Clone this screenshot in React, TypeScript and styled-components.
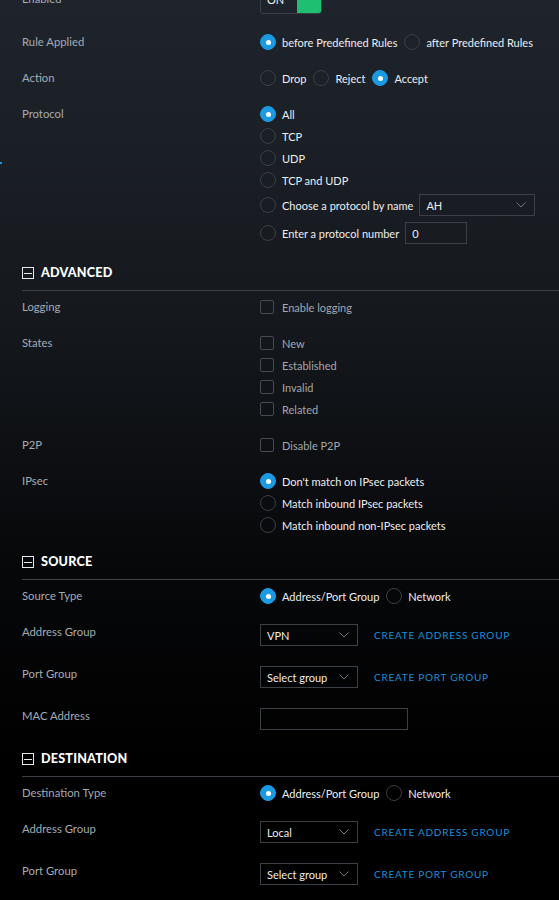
import * as React from "react";
import styled, { createGlobalStyle } from "styled-components";

const colors = {
  label: "#a3abb4",
  text: "#eceef0",
  muted: "#a2a7ad",
  border: "#3b4047",
  blue: "#1b9ae2",
  link: "#1a8fd9",
  green: "#1fbf72",
};

const LABEL_SIZE = "11.3px";
const OPTION_SIZE = "11px";

const GlobalStyle = createGlobalStyle`
  html, body {
    margin: 0;
    padding: 0;
    background: #000;
  }
  body {
    font-family: Lato, "Open Sans", sans-serif;
    -webkit-font-smoothing: antialiased;
  }
`;

const Page = styled.div`
  position: relative;
  min-height: 900px;
  overflow: hidden;
  background: linear-gradient(180deg, #1f242c 0%, #15191e 35%, #07080a 62%, #000 85%);
`;

const Content = styled.div`
  margin-top: -12px;
  padding-left: 22px;
`;

const EdgeMark = styled.span`
  position: absolute;
  left: 0;
  top: 162px;
  width: 2px;
  height: 2px;
  background: ${colors.blue};
`;

const Row = styled.div`
  display: flex;
  align-items: flex-start;
  margin-bottom: 14px;
`;

const Label = styled.div`
  width: 238px;
  flex-shrink: 0;
  padding-top: 3px;
  font-size: ${LABEL_SIZE};
  line-height: 16px;
  color: ${colors.label};
`;

const Control = styled.div<{ $inline?: boolean }>`
  display: flex;
  flex-direction: ${(p) => (p.$inline ? "row" : "column")};
  align-items: ${(p) => (p.$inline ? "center" : "flex-start")};
`;

const Option = styled.label`
  display: flex;
  align-items: center;
  min-height: 22px;
  margin-right: 7px;
  gap: 6px;
`;

const Radio = styled.span<{ $checked?: boolean }>`
  box-sizing: border-box;
  width: 16px;
  height: 16px;
  border-radius: 50%;
  flex-shrink: 0;
  border: 1px solid ${(p) => (p.$checked ? colors.blue : "#3a3f46")};
  background: ${(p) => (p.$checked ? colors.blue : "transparent")};
  display: flex;
  align-items: center;
  justify-content: center;

  &::after {
    content: "";
    width: 5px;
    height: 5px;
    border-radius: 50%;
    background: #fff;
    display: ${(p) => (p.$checked ? "block" : "none")};
  }
`;

const Checkbox = styled.span`
  box-sizing: border-box;
  width: 14px;
  height: 14px;
  flex-shrink: 0;
  border: 1px solid #464b52;
  border-radius: 2px;
  margin-right: 2px;
`;

const OptionText = styled.span<{ $muted?: boolean }>`
  font-size: ${OPTION_SIZE};
  color: ${(p) => (p.$muted ? colors.muted : colors.text)};
  white-space: nowrap;
`;

const Toggle = styled.div`
  display: flex;
  box-sizing: border-box;
  width: 62px;
  height: 26px;
  border: 1px solid #3a3f46;
  border-radius: 3px;
  overflow: hidden;
  margin-bottom: 3px;
`;

const ToggleText = styled.span`
  width: 30px;
  font-size: ${OPTION_SIZE};
  line-height: 22px;
  padding-left: 6px;
  color: ${colors.text};
`;

const ToggleKnob = styled.span`
  flex: 1;
  background: ${colors.green};
`;

const SelectBox = styled.div<{ $width: number }>`
  box-sizing: border-box;
  display: flex;
  align-items: center;
  justify-content: space-between;
  width: ${(p) => p.$width}px;
  height: 22px;
  margin: 3px 0;
  padding: 0 8px 0 6px;
  border: 1px solid ${colors.border};
  font-size: ${OPTION_SIZE};
  color: ${colors.text};
`;

const TextInput = styled.input<{ $width: number }>`
  box-sizing: border-box;
  width: ${(p) => p.$width}px;
  height: 22px;
  margin: 3px 0;
  padding: 0 6px;
  border: 1px solid ${colors.border};
  border-radius: 0;
  background: transparent;
  font-family: Lato, sans-serif;
  font-size: ${OPTION_SIZE};
  color: ${colors.text};
  outline: none;
`;

const Link = styled.a`
  margin-left: 16px;
  font-size: 10px;
  letter-spacing: 0.75px;
  text-transform: uppercase;
  color: ${colors.link};
  cursor: pointer;
`;

const SectionHeader = styled.div`
  display: flex;
  align-items: center;
  gap: 7px;
  padding: 4px 0 9px;
  border-bottom: 1px solid #3d4249;
  margin-bottom: 5px;
`;

const CollapseIcon = styled.span`
  box-sizing: border-box;
  width: 12px;
  height: 12px;
  border: 1px solid #e6e8ea;
  display: flex;
  align-items: center;
  justify-content: center;

  &::after {
    content: "";
    width: 8px;
    height: 1px;
    background: #e6e8ea;
  }
`;

const SectionTitle = styled.span`
  font-size: 12.6px;
  line-height: 16px;
  font-weight: 900;
  letter-spacing: 0.2px;
  color: #fff;
`;

const Chevron = () => (
  <svg width="10" height="6" viewBox="0 0 10 6" fill="none">
    <path d="M0.5 0.5 L5 5 L9.5 0.5" stroke="#6f757c" strokeWidth="1" />
  </svg>
);

const Select = ({ value, width = 98 }: { value: string; width?: number }) => (
  <SelectBox $width={width}>
    <span>{value}</span>
    <Chevron />
  </SelectBox>
);

const RadioOption = ({ checked, children }: any) => (
  <Option>
    <Radio $checked={checked} />
    {children}
  </Option>
);

const CheckOption = ({ text }: { text: string }) => (
  <Option>
    <Checkbox />
    <OptionText $muted>{text}</OptionText>
  </Option>
);

const Section = ({ title }: { title: string }) => (
  <SectionHeader>
    <CollapseIcon />
    <SectionTitle>{title}</SectionTitle>
  </SectionHeader>
);

const GroupRows = ({ typeLabel, address }: { typeLabel: string; address: string }) => (
  <>
    <Row>
      <Label>{typeLabel}</Label>
      <Control $inline>
        <RadioOption checked>
          <OptionText>Address/Port Group</OptionText>
        </RadioOption>
        <RadioOption>
          <OptionText>Network</OptionText>
        </RadioOption>
      </Control>
    </Row>
    <Row>
      <Label>Address Group</Label>
      <Control $inline>
        <Select value={address} />
        <Link>Create address group</Link>
      </Control>
    </Row>
    <Row>
      <Label>Port Group</Label>
      <Control $inline>
        <Select value="Select group" />
        <Link>Create port group</Link>
      </Control>
    </Row>
  </>
);

const App = () => {
  return (
    <Page>
      <GlobalStyle />
      <EdgeMark />
      <Content>
        <Row>
          <Label>Enabled</Label>
          <Toggle>
            <ToggleText>ON</ToggleText>
            <ToggleKnob />
          </Toggle>
        </Row>

        <Row>
          <Label>Rule Applied</Label>
          <Control $inline>
            <RadioOption checked>
              <OptionText>before Predefined Rules</OptionText>
            </RadioOption>
            <RadioOption>
              <OptionText>after Predefined Rules</OptionText>
            </RadioOption>
          </Control>
        </Row>

        <Row>
          <Label>Action</Label>
          <Control $inline>
            <RadioOption>
              <OptionText>Drop</OptionText>
            </RadioOption>
            <RadioOption>
              <OptionText>Reject</OptionText>
            </RadioOption>
            <RadioOption checked>
              <OptionText>Accept</OptionText>
            </RadioOption>
          </Control>
        </Row>

        <Row>
          <Label>Protocol</Label>
          <Control>
            <RadioOption checked>
              <OptionText>All</OptionText>
            </RadioOption>
            <RadioOption>
              <OptionText>TCP</OptionText>
            </RadioOption>
            <RadioOption>
              <OptionText>UDP</OptionText>
            </RadioOption>
            <RadioOption>
              <OptionText>TCP and UDP</OptionText>
            </RadioOption>
            <RadioOption>
              <OptionText>Choose a protocol by name</OptionText>
              <Select value="AH" width={116} />
            </RadioOption>
            <RadioOption>
              <OptionText>Enter a protocol number</OptionText>
              <TextInput $width={62} defaultValue="0" />
            </RadioOption>
          </Control>
        </Row>

        <Section title="ADVANCED" />

        <Row>
          <Label>Logging</Label>
          <Control>
            <CheckOption text="Enable logging" />
          </Control>
        </Row>

        <Row>
          <Label>States</Label>
          <Control>
            {["New", "Established", "Invalid", "Related"].map((s) => (
              <CheckOption key={s} text={s} />
            ))}
          </Control>
        </Row>

        <Row>
          <Label>P2P</Label>
          <Control>
            <CheckOption text="Disable P2P" />
          </Control>
        </Row>

        <Row>
          <Label>IPsec</Label>
          <Control>
            <RadioOption checked>
              <OptionText>Don't match on IPsec packets</OptionText>
            </RadioOption>
            <RadioOption>
              <OptionText>Match inbound IPsec packets</OptionText>
            </RadioOption>
            <RadioOption>
              <OptionText>Match inbound non-IPsec packets</OptionText>
            </RadioOption>
          </Control>
        </Row>

        <Section title="SOURCE" />
        <GroupRows typeLabel="Source Type" address="VPN" />
        <Row>
          <Label>MAC Address</Label>
          <Control>
            <TextInput $width={148} />
          </Control>
        </Row>

        <Section title="DESTINATION" />
        <GroupRows typeLabel="Destination Type" address="Local" />
      </Content>
    </Page>
  );
};

export default App;
